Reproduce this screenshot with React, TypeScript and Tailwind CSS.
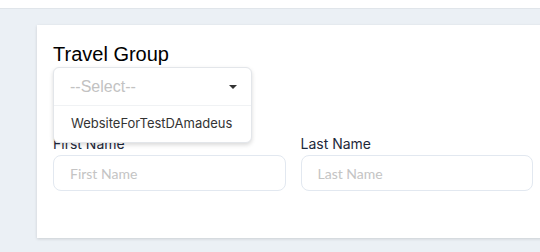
import { useState } from "react";

function Field({ label }: { label: string }) {
  return (
    <div className="flex flex-col">
      <label className="text-[14px] leading-5 text-[#1e293b] font-['Inter',sans-serif]">
        {label}
      </label>
      <input
        placeholder={label}
        className="mt-[1px] h-[36px] rounded-lg border border-[#e2e8f0] px-4 text-[14px] font-['Lato',sans-serif] text-[#333] placeholder:text-[#c4c4c4] outline-none"
      />
    </div>
  );
}

export default function App() {
  const [open] = useState(true);

  return (
    <div className="w-[540px] h-[252px] overflow-hidden bg-[#ebf0f5]">
      <div className="h-[9px] bg-white border-b border-[#e0e5ea]" />
      <div className="pl-[37px] pt-[16px]">
        <div className="w-[512px] h-[213px] bg-white shadow-[0_1px_3px_rgba(0,0,0,0.14)] pl-4 pr-4 pt-[18px]">
          <div className="text-[20px] leading-[23px] text-black font-['Liberation_Sans',Arial,sans-serif]">
            Travel Group
          </div>

          {/* dropdown, menu hangs over the row below */}
          <div className="relative h-[38px] mt-[1px] w-[199px]">
            <div className="absolute inset-x-0 top-0 z-10 bg-white border border-[#e3e6ea] rounded-md shadow-[0_2px_4px_rgba(0,0,0,0.15)]">
              <div className="h-[38px] flex items-center justify-between pl-4 pr-[14px] border-b border-[#f0f2f4]">
                <span className="text-[16px] text-[#c2c2c2] font-['Liberation_Sans',Arial,sans-serif]">
                  --Select--
                </span>
                <svg width="8" height="4" viewBox="0 0 8 4">
                  <path d="M0 0h8L4 4z" fill="#333" />
                </svg>
              </div>
              {open && (
                <div className="h-[36px] flex items-center pl-[17px] text-[13px] text-[#333] font-['Inter',sans-serif]">
                  WebsiteForTestDAmadeus
                </div>
              )}
            </div>
          </div>

          <div className="grid grid-cols-2 gap-[15px] mt-[29px]">
            <Field label="First Name" />
            <Field label="Last Name" />
          </div>
        </div>
      </div>
    </div>
  );
}
